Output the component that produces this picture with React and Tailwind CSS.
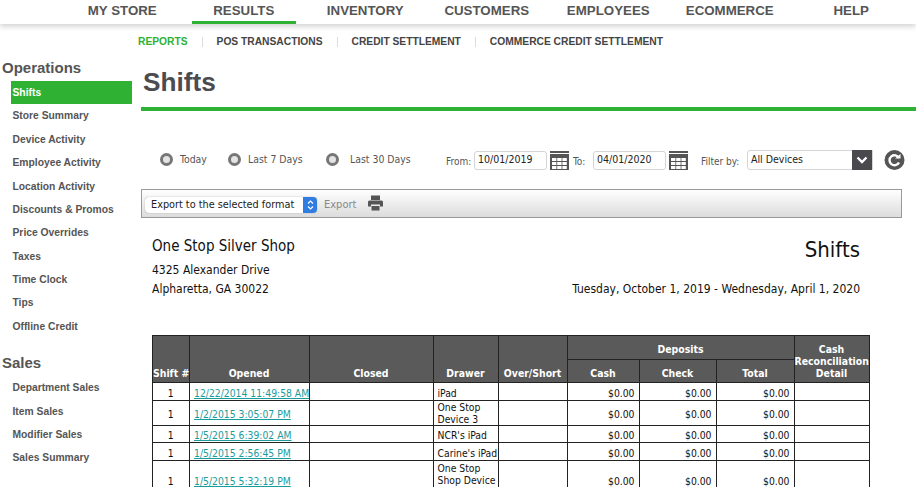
import React from "react";

const topNav = ["MY STORE", "RESULTS", "INVENTORY", "CUSTOMERS", "EMPLOYEES", "ECOMMERCE", "HELP"];
const subNav = ["REPORTS", "POS TRANSACTIONS", "CREDIT SETTLEMENT", "COMMERCE CREDIT SETTLEMENT"];
const operations = [
  "Shifts",
  "Store Summary",
  "Device Activity",
  "Employee Activity",
  "Location Activity",
  "Discounts & Promos",
  "Price Overrides",
  "Taxes",
  "Time Clock",
  "Tips",
  "Offline Credit",
];
const sales = ["Department Sales", "Item Sales", "Modifier Sales", "Sales Summary"];

const rows = [
  { opened: "12/22/2014 11:49:58 AM", drawer: "iPad", h: "h-[18px]", drawerCell: "pt-[2px]" },
  { opened: "1/2/2015 3:05:07 PM", drawer: "One Stop Device 3", h: "h-[25px]", drawerCell: "pt-0" },
  { opened: "1/5/2015 6:39:02 AM", drawer: "NCR's iPad", h: "h-[17px]", drawerCell: "pt-[2px]" },
  { opened: "1/5/2015 2:56:45 PM", drawer: "Carine's iPad", h: "h-[18px]", drawerCell: "pt-[2px]" },
  { opened: "1/5/2015 5:32:19 PM", drawer: "One Stop Shop Device", h: "h-[38px]", drawerCell: "align-top pt-[1px]" },
];

const CalendarIcon = () => (
  <svg width="19" height="19" viewBox="0 0 19 19" className="shrink-0">
    <rect x="0" y="0" width="19" height="2" fill="#555" />
    <rect x="0" y="3" width="19" height="16" fill="#555" />
    {[0, 1, 2].map((r) =>
      [0, 1, 2].map((c) => <rect key={`${r}-${c}`} x={2 + c * 5.2} y={7 + r * 4} width="4.4" height="3" fill="#fff" />)
    )}
  </svg>
);

const Radio = ({ label, className, gap }) => (
  <label className={`flex items-center ${className}`}>
    <span className="w-[13px] h-[13px] rounded-full bg-[#e4e4e4] border-[3px] border-[#777]" />
    <span className={`${gap} text-[10.4px] text-[#555]`}>{label}</span>
  </label>
);

const DateInput = ({ value }) => (
  <div className="w-[73px] h-[19px] pl-[3px] flex items-center bg-white border border-[#d5d5d5] rounded-[3px] text-[10.5px] text-[#222]">
    {value}
  </div>
);

const App = () => {
  return (
    <div className="w-[916px] h-[487px] overflow-hidden bg-white font-['Liberation_Sans',sans-serif]">
      {/* Top nav */}
      <div className="h-[24px] pl-[61.5px] flex shadow-[0_3px_5px_rgba(0,0,0,0.16)]">
        {topNav.map((item) => (
          <div key={item} className="w-[121.5px] px-[9px]">
            <div
              className={`h-[24px] pt-[2px] text-center text-[13.3px] leading-[17px] font-bold text-[#555] ${
                item === "RESULTS" ? "border-b-[3px] border-[#2fb234]" : ""
              }`}
            >
              {item}
            </div>
          </div>
        ))}
      </div>

      {/* Sub nav */}
      <div className="h-[34px] pl-[138px] flex items-center pt-[1px]">
        {subNav.map((item, i) => (
          <React.Fragment key={item}>
            {i > 0 && <span className="w-px h-[10px] mx-[14px] bg-[#ddd]" />}
            <span className={`text-[10.25px] font-bold ${i === 0 ? "text-[#2fb234]" : "text-[#444]"}`}>{item}</span>
          </React.Fragment>
        ))}
      </div>

      <div className="flex">
        {/* Sidebar */}
        <div className="w-[141px] shrink-0 pt-[1px]">
          <h3 className="pl-[2px] h-[22px] text-[15px] leading-[18px] font-bold text-[#555]">Operations</h3>
          <ul className="pl-[11px]">
            {operations.map((item, i) => (
              <li
                key={item}
                className={`w-[121px] h-[23.4px] pl-[1.5px] flex items-center text-[10.3px] font-bold ${
                  i === 0 ? "bg-[#2fb234] text-white" : "text-[#555]"
                }`}
              >
                {item}
              </li>
            ))}
          </ul>
          <h3 className="pl-[2px] mt-[16px] h-[22px] text-[15px] leading-[18px] font-bold text-[#555]">Sales</h3>
          <ul className="pl-[11px]">
            {sales.map((item) => (
              <li key={item} className="h-[23.4px] pl-[1.5px] flex items-center text-[10.3px] font-bold text-[#555]">
                {item}
              </li>
            ))}
          </ul>
        </div>

        {/* Main */}
        <div className="flex-1 font-['DejaVu_Sans_Condensed','Noto_Sans',sans-serif]">
          <div className="h-[53px] pl-[2px] pt-[8px] border-b-[4px] border-[#2fb234]">
            <h1 className="font-['Liberation_Sans',sans-serif] text-[26.2px] leading-[32px] font-bold text-[#4b4b50]">Shifts</h1>
          </div>

          {/* Filters */}
          <div className="h-[78px] pt-[20px] flex items-center">
            <Radio label="Today" gap="ml-[7px]" className="ml-[19px] w-[68px]" />
            <Radio label="Last 7 Days" gap="ml-[7px]" className="w-[98px]" />
            <Radio label="Last 30 Days" gap="ml-[11px]" className="w-[120px]" />
            <span className="mt-[2px] text-[10px] text-[#555] w-[28px]">From:</span>
            <DateInput value="10/01/2019" />
            <span className="ml-[3px]"><CalendarIcon /></span>
            <span className="mt-[2px] ml-[4px] text-[10px] text-[#555] w-[20px]">To:</span>
            <DateInput value="04/01/2020" />
            <span className="ml-[3px]"><CalendarIcon /></span>
            <span className="mt-[2px] ml-[13px] text-[10px] text-[#555] w-[46px]">Filter by:</span>
            <div className="w-[126px] h-[20px] flex items-center justify-between bg-white border border-[#d5d5d5] rounded-l-[3px] pl-[3px] text-[10.5px] text-[#222]">
              All Devices
              <span className="w-[20px] h-[20px] bg-[#4a4a4e] flex items-center justify-center">
                <svg width="12" height="8" viewBox="0 0 12 8">
                  <path d="M1.5 1.5 L6 6 L10.5 1.5" fill="none" stroke="#fff" strokeWidth="2.4" />
                </svg>
              </span>
            </div>
            <svg width="21" height="20" viewBox="0 0 21 20" className="ml-[11px]">
              <circle cx="10.5" cy="10" r="10" fill="#555" />
              <path d="M15 8 A5 5 0 1 0 15 12.5" fill="none" stroke="#fff" strokeWidth="2.4" />
              <path d="M11 8.5 L16.5 8.5 L16.5 4 Z" fill="#fff" />
            </svg>
          </div>

          {/* Export bar */}
          <div className="w-[761px] h-[29px] flex items-center pl-[3px] border border-[#999] bg-gradient-to-b from-white to-[#dcdcdc]">
            <div className="mt-[3px] w-[172px] h-[16px] flex items-center justify-between pl-[6px] bg-white rounded-[4px] shadow-[0_0_1px_rgba(0,0,0,0.5)] text-[10.8px] text-[#222] overflow-hidden">
              Export to the selected format
              <span className="w-[14px] h-[16px] bg-[#2f7de1] flex items-center justify-center">
                <svg width="7" height="12" viewBox="0 0 7 12">
                  <path d="M1 4.5 L3.5 2 L6 4.5 M1 7.5 L3.5 10 L6 7.5" fill="none" stroke="#fff" strokeWidth="1.2" />
                </svg>
              </span>
            </div>
            <span className="mt-[3px] ml-[7px] text-[11px] text-[#888]">Export</span>
            <svg width="15" height="16" viewBox="0 0 15 16" className="ml-[12px] -mt-[2px]">
              <path d="M3 0.5 H12 V5 H3 Z" fill="#555" />
              <path d="M1.5 5.5 H13.5 Q15 5.5 15 7 V11.5 H12 V9.5 H3 V11.5 H0 V7 Q0 5.5 1.5 5.5 Z" fill="#555" />
              <path d="M3.5 11 H11.5 V15.5 H3.5 Z" fill="#555" />
            </svg>
          </div>

          {/* Report head */}
          <div className="w-[708px] ml-[11px] mt-[18px] flex justify-between text-[#111]">
            <div>
              <div className="h-[21px] text-[15px] leading-[21px]">One Stop Silver Shop</div>
              <div className="mt-[4px] h-[19px] text-[12px] leading-[19px]">4325 Alexander Drive</div>
              <div className="h-[19px] text-[12px] leading-[19px]">Alpharetta, GA 30022</div>
            </div>
            <div className="text-right">
              <div className="h-[44px] text-[22px] leading-[28px] text-[#111]">Shifts</div>
              <div className="h-[19px] text-[12px] leading-[19px]">Tuesday, October 1, 2019 - Wednesday, April 1, 2020</div>
            </div>
          </div>

          {/* Table */}
          <table className="ml-[11px] mt-[36px] w-[716.5px] table-fixed border-collapse text-[10.3px] leading-[12px] text-[#111]">
            <colgroup>
              <col className="w-[36.5px]" />
              <col className="w-[120px]" />
              <col className="w-[124px]" />
              <col className="w-[65px]" />
              <col className="w-[69px]" />
              <col className="w-[72px]" />
              <col className="w-[77px]" />
              <col className="w-[78px]" />
              <col className="w-[75px]" />
            </colgroup>
            <thead>
              <tr className="h-[24px] bg-[#5a5a5a] text-white text-[10.4px] font-bold">
                {["Shift #", "Opened", "Closed", "Drawer", "Over/Short"].map((h) => (
                  <th key={h} rowSpan={2} className="border border-[#222] align-bottom pb-[3px] whitespace-nowrap">
                    {h}
                  </th>
                ))}
                <th colSpan={3} className="border border-[#222] pt-[3px]">Deposits</th>
                <th rowSpan={2} className="border border-[#222] align-bottom pb-[3px]">
                  <div>Cash</div>
                  <div className="whitespace-nowrap">Reconciliation</div>
                  <div>Detail</div>
                </th>
              </tr>
              <tr className="h-[23px] bg-[#5a5a5a] text-white text-[10.4px] font-bold">
                {["Cash", "Check", "Total"].map((h) => (
                  <th key={h} className="border border-[#222] align-bottom pb-[3px]">{h}</th>
                ))}
              </tr>
            </thead>
            <tbody>
              {rows.map((row) => (
                <tr key={row.opened} className={row.h}>
                  <td className="border border-[#222] pt-[2px] text-center">1</td>
                  <td className="border border-[#222] pt-[2px] pl-[4.5px] whitespace-nowrap">
                    <a className="underline text-[#1a9c9c]">{row.opened}</a>
                  </td>
                  <td className="border border-[#222]"></td>
                  <td className={`border border-[#222] pl-[4px] ${row.drawerCell}`}>{row.drawer}</td>
                  <td className="border border-[#222]"></td>
                  <td className="border border-[#222] pt-[2px] text-right pr-[4px]">$0.00</td>
                  <td className="border border-[#222] pt-[2px] text-right pr-[4px]">$0.00</td>
                  <td className="border border-[#222] pt-[2px] text-right pr-[4px]">$0.00</td>
                  <td className="border border-[#222]"></td>
                </tr>
              ))}
            </tbody>
          </table>
        </div>
      </div>
    </div>
  );
};

export default App;
